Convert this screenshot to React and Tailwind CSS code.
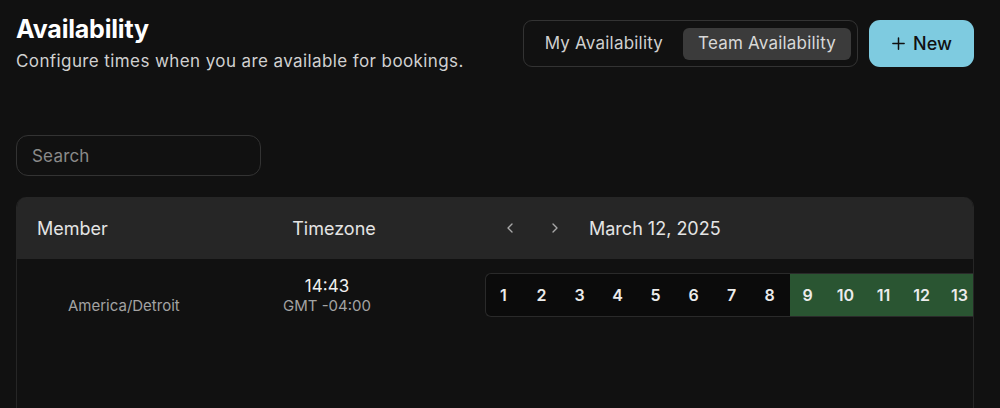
import React from 'react';

const hours = [1, 2, 3, 4, 5, 6, 7, 8, 9, 10, 11, 12, 13];

function Chevron({ dir }) {
  return (
    <svg width="16" height="16" viewBox="0 0 24 24" fill="none" stroke="currentColor" strokeWidth="2" strokeLinecap="round" strokeLinejoin="round">
      {dir === 'left' ? <path d="M15 18l-6-6 6-6" /> : <path d="M9 18l6-6-6-6" />}
    </svg>
  );
}

export default function App() {
  return (
    <div className="h-[408px] w-[1000px] overflow-hidden bg-[#111111] text-white" style={{ fontFamily: 'Inter, "Noto Sans", sans-serif' }}>
      {/* top bar */}
      <div className="flex items-start justify-between pl-4 pr-[26px] pt-[14px]">
        <div>
          <h1 className="text-[25px] font-bold leading-[30px] tracking-[-0.2px] text-white">Availability</h1>
          <p className="mt-[6px] text-[17px] leading-[22px] tracking-[0.4px] text-[#d0d0d0]">Configure times when you are available for bookings.</p>
        </div>
        <div className="mt-[6px] flex items-center gap-[11px]">
          <div className="flex h-[47px] items-center gap-[5px] rounded-[9px] border border-[#333333] px-[6px]">
            <button className="h-[32px] rounded-[6px] px-[15px] text-[17px] tracking-[0.2px] text-[#cfcfcf]">My Availability</button>
            <button className="h-[32px] rounded-[6px] bg-[#3b3b3b] px-[15px] text-[17px] tracking-[0.2px] text-[#d8d8d8]">Team Availability</button>
          </div>
          <button className="flex h-[47px] w-[105px] items-center justify-center gap-[7px] rounded-[11px] bg-[#7ecbe0] text-[18px] font-medium text-[#111111]">
            <svg width="15" height="15" viewBox="0 0 16 16" stroke="currentColor" strokeWidth="1.6" strokeLinecap="round">
              <path d="M8 2v12M2 8h12" />
            </svg>
            New
          </button>
        </div>
      </div>

      {/* search */}
      <div className="px-4 pt-[63px]">
        <input
          placeholder="Search"
          className="h-[41px] w-[245px] rounded-[12px] border border-[#333333] bg-transparent px-[15px] text-[17px] tracking-[0.2px] text-white placeholder:text-[#8a8a8a] outline-none"
        />
      </div>

      {/* table */}
      <div className="ml-4 mr-[26px] mt-[21px] h-[220px] overflow-hidden rounded-t-[10px] border-x border-[#262626]">
        <div className="flex h-[62px] items-center bg-[#262626] text-[18px] text-[#e4e4e4]">
          <div className="w-[235px] pl-[20px]">Member</div>
          <div className="w-[164px] text-center">Timezone</div>
          <div className="flex items-center pl-[86px] text-[#a8a8a8]">
            <Chevron dir="left" />
            <span className="ml-[29px]"><Chevron dir="right" /></span>
            <span className="ml-[26px] text-[18px] text-[#e4e4e4]">March 12, 2025</span>
          </div>
        </div>
        <div className="flex items-start pt-[14px]">
          <div className="mt-[22px] w-[235px] pl-[51px] text-[15px] leading-[22px] text-[#a3a3a3]">America/Detroit</div>
          <div className="mt-[3px] w-[150px] text-center leading-[20px]">
            <div className="text-[17px] text-[#f0f0f0]">14:43</div>
            <div className="text-[15px] text-[#a3a3a3]">GMT -04:00</div>
          </div>
          <div className="ml-[83px] flex h-[44px] flex-1 overflow-hidden rounded-l-[6px] border-y border-l border-[#2a2a2a] bg-[#0b0b0b]">
            {hours.map((h) => (
              <div
                key={h}
                className={`flex w-[38px] shrink-0 items-center justify-center pr-[3px] text-[16px] font-semibold text-[#ececec] ${h >= 9 ? 'bg-[#2a5532]' : ''}`}
              >
                {h}
              </div>
            ))}
          </div>
        </div>
      </div>
    </div>
  );
}
